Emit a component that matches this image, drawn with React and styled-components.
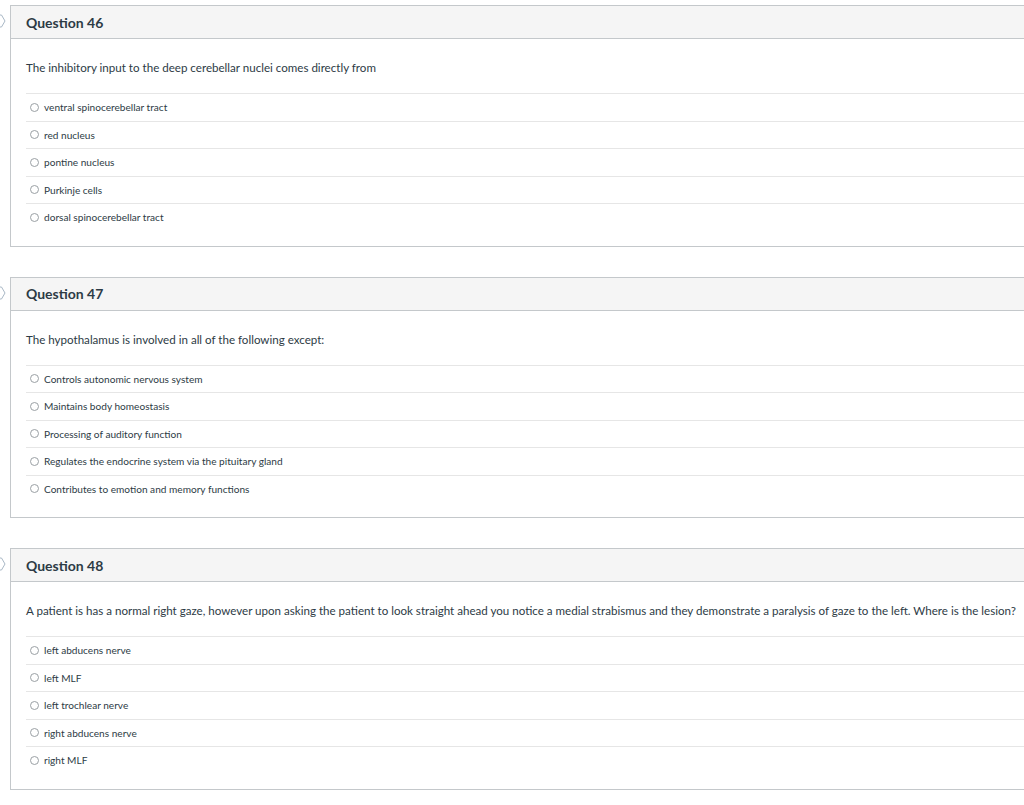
import React from "react";
import styled, { createGlobalStyle } from "styled-components";

const GlobalStyle = createGlobalStyle`
  body {
    margin: 0;
    background: #ffffff;
    font-family: Lato, "Noto Sans", sans-serif;
    color: #2d3b45;
    overflow: hidden;
  }
`;

const Page = styled.div`
  display: flex;
  flex-direction: column;
  gap: 30px;
  padding-top: 5px;
`;

const Row = styled.div`
  display: flex;
  align-items: flex-start;
`;

const Marker = styled.div`
  width: 10px;
  flex: none;
  padding-top: 9px;
  display: flex;
`;

const Card = styled.div`
  flex: none;
  width: 1060px;
  border: 1px solid #c4c8cb;
  box-sizing: border-box;
`;

const Header = styled.div`
  height: 33px;
  box-sizing: border-box;
  display: flex;
  align-items: center;
  justify-content: space-between;
  padding: 0 8px 0 15px;
  background: #f5f5f5;
  border-bottom: 1px solid #c4c8cb;
`;

const Title = styled.h2`
  margin: 0;
  font-size: 14px;
  font-weight: 700;
  color: #2d3b45;
`;

const Points = styled.span`
  font-size: 14px;
  color: #444;
`;

const Body = styled.div`
  padding: 20px 0 15px 15px;
`;

const Prompt = styled.p`
  margin: 0 0 16px;
  font-size: 11.58px;
  line-height: 18px;
  white-space: nowrap;
`;

const Answers = styled.ul`
  list-style: none;
  margin: 0;
  padding: 0;
`;

const Answer = styled.li`
  height: 27.5px;
  box-sizing: border-box;
  border-top: 1px solid #e6e6e6;
  display: flex;
  align-items: center;
  gap: 5px;
  padding-left: 4px;
  font-size: 10.1px;
`;

const Radio = styled.span`
  width: 7px;
  height: 7px;
  border: 1px solid #9aa0a4;
  border-radius: 50%;
  flex: none;
`;

const questions = [
  {
    n: 46,
    text: "The inhibitory input to the deep cerebellar nuclei comes directly from",
    answers: [
      "ventral spinocerebellar tract",
      "red nucleus",
      "pontine nucleus",
      "Purkinje cells",
      "dorsal spinocerebellar tract",
    ],
  },
  {
    n: 47,
    text: "The hypothalamus is involved in all of the following except:",
    answers: [
      "Controls autonomic nervous system",
      "Maintains body homeostasis",
      "Processing of auditory function",
      "Regulates the endocrine system via the pituitary gland",
      "Contributes to emotion and memory functions",
    ],
  },
  {
    n: 48,
    text: "A patient is has a normal right gaze, however upon asking the patient to look straight ahead you notice a medial strabismus and they demonstrate a paralysis of gaze to the left. Where is the lesion?",
    answers: [
      "left abducens nerve",
      "left MLF",
      "left trochlear nerve",
      "right abducens nerve",
      "right MLF",
    ],
  },
];

function Flag() {
  return (
    <svg width="6" height="14" viewBox="0 0 6 14">
      <path d="M0 1 H1.5 L5 7 L1.5 13 H0" fill="none" stroke="#a9b8c6" strokeWidth="1" />
    </svg>
  );
}

export default function App() {
  return (
    <>
      <GlobalStyle />
      <Page>
        {questions.map((q) => (
          <Row key={q.n}>
            <Marker>
              <Flag />
            </Marker>
            <Card>
              <Header>
                <Title>Question {q.n}</Title>
                <Points>1 pts</Points>
              </Header>
              <Body>
                <Prompt>{q.text}</Prompt>
                <Answers>
                  {q.answers.map((a) => (
                    <Answer key={a}>
                      <Radio />
                      {a}
                    </Answer>
                  ))}
                </Answers>
              </Body>
            </Card>
          </Row>
        ))}
      </Page>
    </>
  );
}
